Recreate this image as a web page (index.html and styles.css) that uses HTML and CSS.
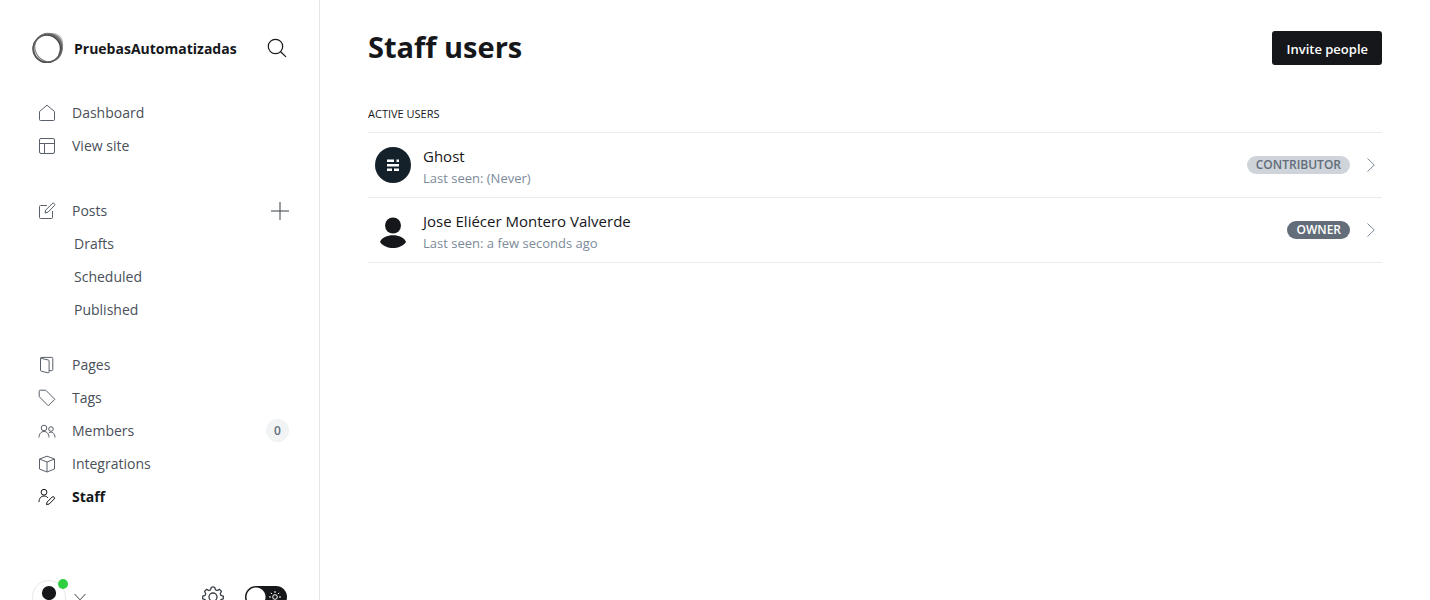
FILE: index.html
```html
<!DOCTYPE html>
<html lang="en">
<head>
<meta charset="utf-8">
<title>Staff users</title>
<link rel="stylesheet" href="styles.css">
</head>
<body>
<div class="app">
  <aside class="sidebar">
    <header class="brand">
      <svg class="brand-logo" viewBox="0 0 32 32" aria-hidden="true">
        <path fill="#b5b5b5" fill-rule="evenodd" d="M13 3C18 0 25 0 29 5c4 6 2 14-2 19l-1-2c3-6 2-11-2-15-3-3-7-4-11-4z"/>
        <ellipse cx="14.800" cy="16.800" rx="13.800" ry="13.600" stroke="#444" stroke-width="1.300"/>
        <ellipse cx="16" cy="16" rx="14.500" ry="13.500" transform="rotate(-40 16 16)" stroke="#666" stroke-width="1"/>
        <ellipse cx="16.500" cy="15.500" rx="14.500" ry="13.500" transform="rotate(65 16.500 15.500)" stroke="#777" stroke-width="1"/>
        <ellipse cx="15.300" cy="16.300" rx="14.300" ry="14" stroke="#555" stroke-width="1"/>
      </svg>
      <span class="brand-name">PruebasAutomatizadas</span>
      <button class="icon-button search" aria-label="Search">
        <svg viewBox="0 0 20 20" width="20" height="20"><circle cx="8.500" cy="8.500" r="7.200"/><path d="M13.600 13.700 19 18.900"/></svg>
      </button>
    </header>
    <nav class="nav">
      <ul class="nav-group nav-top">
        <li><a class="nav-link" href="#"><svg viewBox="0 0 18 18"><path d="M1.500 7.500 9 1.200l7.500 6.300v8a1 1 0 0 1-1 1h-13a1 1 0 0 1-1-1z"/></svg>Dashboard</a></li>
        <li><a class="nav-link" href="#"><svg viewBox="0 0 18 18"><rect x="1.500" y="1.500" width="15" height="15" rx="1.500"/><path d="M1.500 6.500h15M6.500 6.500v10"/></svg>View site</a></li>
      </ul>
      <ul class="nav-group nav-posts">
        <li class="nav-row"><a class="nav-link" href="#"><svg viewBox="0 0 18 18"><path d="M9 3.500H2.500a1 1 0 0 0-1 1v11a1 1 0 0 0 1 1h11a1 1 0 0 0 1-1V9M7 11l.8-3 6.400-6.400a1.300 1.300 0 0 1 2.100 2.100L10 10.200z"/></svg>Posts</a>
          <button class="icon-button add" aria-label="New post"><svg viewBox="0 0 18 18" width="18" height="18"><path d="M9 0v18M0 9h18"/></svg></button></li>
        <li><a class="nav-link sub" href="#">Drafts</a></li>
        <li><a class="nav-link sub" href="#">Scheduled</a></li>
        <li><a class="nav-link sub" href="#">Published</a></li>
      </ul>
      <ul class="nav-group">
        <li><a class="nav-link" href="#"><svg viewBox="0 0 18 18"><path d="M2.500 2.200 10.300 4a1 1 0 0 1 .8 1v10.800a1 1 0 0 1-1.200 1L3.300 15.200a1 1 0 0 1-.8-1zM2.500 2.200a1 1 0 0 1 .8-.8h10.500a1 1 0 0 1 1 1v11.200a1 1 0 0 1-1 1h-2.700"/></svg>Pages</a></li>
        <li><a class="nav-link" href="#"><svg viewBox="0 0 18 18"><path d="M1.200 2.200a1 1 0 0 1 1-1h5.500L16.800 10.300 10.300 16.800 1.200 7.700z"/></svg>Tags</a></li>
        <li class="nav-row"><a class="nav-link" href="#"><svg viewBox="0 0 18 18"><circle cx="6" cy="6" r="2.800"/><path d="M1 15.500c0-3.500 2-6 5-6s5 2.500 5 6"/><circle cx="13" cy="7" r="2.300"/><path d="M10.800 10.800c3-2 6.200.5 6.200 4.700"/></svg>Members</a><span class="count">0</span></li>
        <li><a class="nav-link" href="#"><svg viewBox="0 0 18 18"><path d="M9 1.200 16.500 4v10L9 17l-7.500-3V4zM1.500 4 9 7l7.500-3M9 7v10"/></svg>Integrations</a></li>
        <li><a class="nav-link active" href="#" aria-current="page"><svg viewBox="0 0 18 18"><circle cx="6" cy="4.200" r="2.900"/><path d="M1 14c0-3.500 2-6 5-6 1.800 0 3.200.8 4 2M8.500 16.500l.6-2.400 5-5a1.300 1.300 0 0 1 2 2l-5 5z"/></svg>Staff</a></li>
      </ul>
    </nav>
    <footer class="account">
      <button class="account-menu" aria-label="Account">
        <span class="account-avatar"><svg viewBox="0 0 36 36" width="32" height="32"><circle cx="18" cy="13.500" r="8"/><path d="M5 32c3-11 23-11 26 0-6 6-20 6-26 0z"/></svg><span class="status"></span></span>
        <svg class="chevron" viewBox="0 0 12 12" width="12" height="12"><path d="M.5 3 6 8.800 11.500 3"/></svg>
      </button>
      <button class="icon-button settings" aria-label="Settings"><svg viewBox="0 0 22 22" width="22" height="22"><circle cx="11" cy="11" r="4"/><path d="m9.300 1.500-.8 2.300-1.600.7-2.200-1.100-2.100 2.100 1.100 2.300-.7 1.600-2.300.8v2.600l2.300.8.7 1.600-1.100 2.200 2.100 2.100 2.200-1.100 1.600.7.800 2.300h3.400l.8-2.300 1.600-.7 2.200 1.100 2.100-2.100-1.100-2.200.7-1.600 2.300-.8v-2.600l-2.300-.8-.7-1.600 1.100-2.300-2.100-2.100-2.200 1.100-1.600-.7-.8-2.300c-1-.8-2.400-.8-3.400 0z"/></svg></button>
      <label class="theme"><input type="checkbox" role="switch" aria-label="Dark mode"><svg viewBox="0 0 14 14" width="14" height="14"><circle cx="7" cy="7" r="2.300"/><path d="M7 1v2M7 11v2M1 7h2M11 7h2M2.800 2.800l1.300 1.300M9.900 9.900l1.300 1.300M11.200 2.800 9.900 4.100M4.100 9.900l-1.300 1.300"/></svg></label>
    </footer>
  </aside>
  <main class="content">
    <header class="page-header">
      <h1>Staff users</h1>
      <button class="invite">Invite people</button>
    </header>
    <section>
      <h2>Active users</h2>
      <ul class="users">
        <li><a class="user" href="#">
          <svg class="avatar" viewBox="0 0 36 36"><circle cx="18" cy="18" r="18" fill="#15212a"/><path fill="#fff" d="M12 12.500h7V15h-7zM21.500 12.500H24V15h-2.500zM12 17h12v2.500H12zM12 21.500h5V24h-5zM19 21.500h5V24h-5z"/></svg>
          <span class="user-text"><strong>Ghost</strong><small>Last seen: (Never)</small></span>
          <span class="badge">Contributor</span>
          <svg class="arrow" viewBox="0 0 8 14"><path d="M.5.5 7.300 7 .5 13.500"/></svg>
        </a></li>
        <li><a class="user" href="#">
          <svg class="avatar" viewBox="0 0 36 36" fill="#15171a"><circle cx="18" cy="13.500" r="8"/><path d="M5 30c3-9 23-9 26 0-6 8-20 8-26 0z"/></svg>
          <span class="user-text"><strong>Jose Eliécer Montero Valverde</strong><small>Last seen: a few seconds ago</small></span>
          <span class="badge owner">Owner</span>
          <svg class="arrow" viewBox="0 0 8 14"><path d="M.5.5 7.300 7 .5 13.500"/></svg>
        </a></li>
      </ul>
    </section>
  </main>
</div>
</body>
</html>
```
FILE: styles.css
```css
* { box-sizing: border-box; }
body {
  margin: 0;
  font-family: "Open Sans", "Noto Sans", sans-serif;
  font-size: 14px;
  color: #15171a;
  background: #fff;
}
h1, h2, ul { margin: 0; padding: 0; }
ul { list-style: none; }
a { color: inherit; text-decoration: none; }
button { padding: 0; border: 0; background: none; font: inherit; color: inherit; cursor: pointer; }
svg { display: block; flex: none; }
.app { display: flex; height: 100vh; overflow: hidden; }

.sidebar {
  flex: none;
  width: 320px;
  border-right: 1px solid #e5e7ea;
  overflow: hidden;
}
.brand { display: flex; align-items: center; height: 96px; padding: 0 32px; }
.brand-logo { width: 32px; height: 32px; margin-right: 10px; fill: none; }
.brand-name { font-size: 14px; font-weight: 700; }
.icon-button svg { fill: none; stroke: currentColor; }
.search { margin-left: auto; }
.search svg { stroke-width: 1.200; }

.nav-group { margin-bottom: 22px; }
.nav-top { margin-bottom: 32px; }
.nav-row { display: flex; align-items: center; padding-right: 30px; }
.nav-link {
  display: flex;
  align-items: center;
  flex: 1;
  height: 33px;
  padding-left: 38px;
  gap: 16px;
  font-size: 14px;
  color: #495059;
}
.nav-link svg { width: 18px; height: 18px; fill: none; stroke: #596069; stroke-width: 1; }
.nav-link.sub { padding-left: 74px; }
.nav-link.active { font-weight: 700; color: #15171a; }
.nav-link.active svg { stroke: #15171a; }
.add { color: #394047; }
.count {
  width: 23px;
  height: 23px;
  border-radius: 50%;
  background: #f1f3f5;
  font-size: 12px;
  font-weight: 600;
  line-height: 23px;
  text-align: center;
  color: #626d79;
}

.account { display: flex; align-items: center; padding: 45px 32px 0; }
.account-menu { display: flex; align-items: center; gap: 8px; }
.account-avatar { position: relative; border: 1px solid #e5e7ea; border-radius: 50%; fill: #15171a; }
.status { position: absolute; top: -2px; right: -3px; width: 10px; height: 10px; border-radius: 50%; background: #30cf43; }
.chevron { fill: none; stroke: #394047; }
.settings { margin-left: auto; margin-right: 21px; color: #394047; }
.settings svg { stroke-width: 1.300; }
.theme { position: relative; }
.theme input {
  appearance: none;
  display: block;
  width: 42px;
  height: 22px;
  margin: 0;
  border-radius: 11px;
  background: radial-gradient(circle at 11px 11px, #fff 9px, #15171a 10px);
}
.theme svg { position: absolute; top: 4px; right: 5px; fill: none; stroke: #fff; }

.content { flex: 1; min-width: 0; padding: 0 48px; }
.page-header { display: flex; align-items: center; justify-content: space-between; height: 96px; }
h1 { margin-bottom: 2px; font-size: 29px; font-weight: 700; line-height: 40px; }
.invite {
  height: 34px;
  padding: 1px 14px 0;
  border-radius: 3px;
  background: #15171a;
  color: #fff;
  font-size: 13px;
  font-weight: 600;
}
h2 { padding: 10px 0; font-size: 11px; font-weight: 400; line-height: 16px; text-transform: uppercase; }
.users { border-top: 1px solid #e9ecef; }
.user {
  display: flex;
  align-items: center;
  height: 65px;
  padding: 0 7px;
  border-bottom: 1px solid #e9ecef;
}
.avatar { width: 36px; height: 36px; margin-right: 12px; }
.user-text { display: flex; flex: 1; flex-direction: column; padding-top: 3px; }
.user-text strong { font-size: 15px; font-weight: 500; line-height: 22px; }
.user-text small { font-size: 13px; line-height: 22px; color: #7c8b9a; }
.badge {
  padding: 0 9px;
  border-radius: 9px;
  background: #ced4d9;
  color: #626d79;
  font-size: 12px;
  font-weight: 600;
  line-height: 18px;
  text-transform: uppercase;
}
.badge.owner { background: #626d79; color: #fff; }
.arrow { width: 8px; height: 14px; margin-left: 17px; fill: none; stroke: #7c8b9a; }
```
